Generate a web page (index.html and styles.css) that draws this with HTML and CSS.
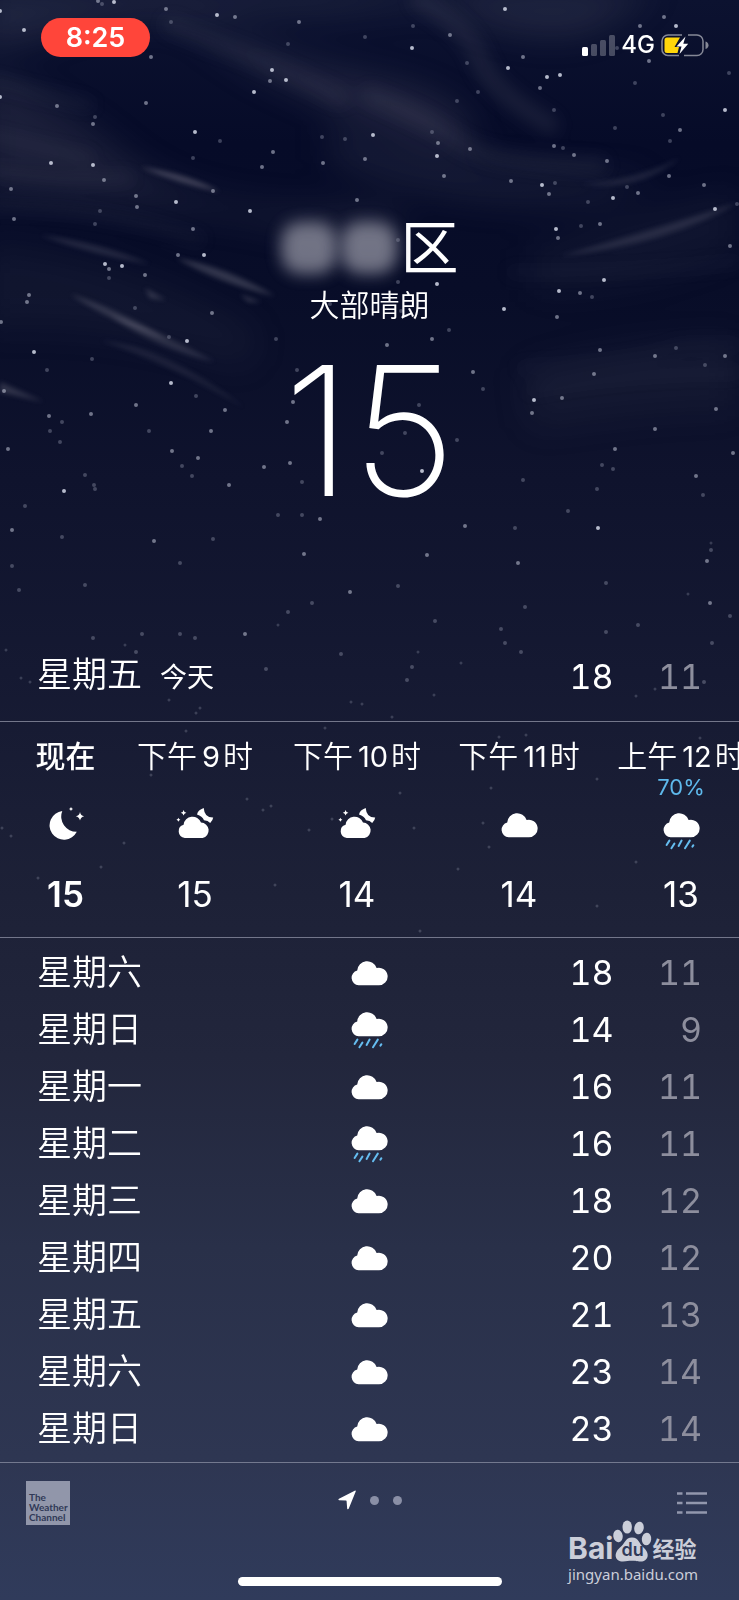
FILE: index.html
```html
<!DOCTYPE html>
<html lang="zh-CN">
<head>
<meta charset="utf-8">
<meta name="viewport" content="width=device-width, initial-scale=1">
<title>天气</title>
<link rel="stylesheet" href="styles.css">
</head>
<body>
<svg class="defs" width="0" height="0" aria-hidden="true">
  <symbol id="cloud" viewBox="0 0 37 26">
    <path d="M7.6 25.3A7.6 7.6 0 0 1 6.2 10.4A10 10 0 0 1 25.6 8A8.8 8.8 0 1 1 27.4 25.3Z"/>
  </symbol>
  <symbol id="rain" viewBox="0 0 37 38">
    <path d="M7.6 25.3A7.6 7.6 0 0 1 6.2 10.4A10 10 0 0 1 25.6 8A8.8 8.8 0 1 1 27.4 25.3Z"/>
    <path class="drops" d="M3.6 33L6.4 28.6M8.4 36.2L11.4 31.6M15.6 34L18.6 28.6M22 36.2L26.8 28.6M29.4 34.6L30.4 33.2"/>
  </symbol>
  <symbol id="night-cloud" viewBox="0 0 38 32">
    <path d="M8.8 31A6.8 6.8 0 0 1 7.6 17.7A9 9 0 0 1 25 15.6A7.8 7.8 0 0 1 26.6 31Z"/>
    <path d="M27.7 1Q22 3 21 7.4Q26.200 8.800 28 13.200Q32 13.400 34.200 16Q36.800 13.800 37.200 10.600Q28.400 10.800 27.700 1Z"/>
    <path d="M7.6 3Q8 5.4 10.4 5.8Q8 6.2 7.6 8.6Q7.2 6.2 4.8 5.8Q7.2 5.4 7.6 3ZM2.4 10.8Q2.7 12.4 4.4 12.8Q2.7 13.2 2.4 14.8Q2.1 13.2 .4 12.8Q2.1 12.4 2.4 10.8Z"/>
  </symbol>
  <symbol id="moon" viewBox="-3 0 39 35">
    <path d="M13.3 5A14.4 14.4 0 1 0 27.8 25.8A15.2 15.2 0 0 1 13.3 5Z"/>
    <path d="M31 6Q31.7 9.7 35.2 10.3Q31.7 10.9 31 14.6Q30.3 10.9 26.8 10.3Q30.3 9.7 31 6ZM22 1Q22.4 2.7 24 3Q22.4 3.3 22 5Q21.6 3.3 20 3Q21.6 2.7 22 1Z"/>
  </symbol>
</svg>

<div class="app">
  <svg class="sky" viewBox="0 0 739 940" preserveAspectRatio="xMidYMin slice" aria-hidden="true">
    <filter id="haze" x="-20%" y="-50%" width="140%" height="200%"><feGaussianBlur stdDeviation="18"/></filter>
    <filter id="mist" x="-20%" y="-50%" width="140%" height="200%"><feGaussianBlur stdDeviation="8"/></filter>
    <filter id="wisp" x="-20%" y="-50%" width="140%" height="200%"><feGaussianBlur stdDeviation="2.500"/></filter>
    <filter id="glow"><feGaussianBlur stdDeviation=".6"/></filter>
    <g class="haze" filter="url(#haze)">
      <path d="M-20 -10H660L590 30Q510 45 440 0L330 10Q200 10 100 20L-20 50Z" opacity=".13"/>
      <path d="M150 0Q260 60 370 80T470 150L420 140Q320 100 260 70Z" opacity=".16"/>
      <path d="M-20 70Q60 100 130 160T400 210L390 250Q200 200 -20 190Z" opacity=".12"/>
      <path d="M330 120Q420 170 660 180L600 200Q440 210 330 160Z" opacity=".1"/>
      <path d="M530 250Q640 210 739 190V250Q640 290 530 290Z" opacity=".05"/>
      <path d="M-20 240Q120 250 260 330L250 370Q120 320 -20 330Z" opacity=".05"/>
      <path d="M520 370Q640 340 739 340V410Q640 410 530 430Z" opacity=".05"/>
    </g>
    <g class="wisps" filter="url(#mist)">
      <path d="M420 0Q470 30 480 60T550 125" stroke-width="20" opacity=".09"/>
      <path d="M170 25Q220 45 240 52T340 98" stroke-width="18" opacity=".07"/>
      <path d="M370 95Q430 120 460 142T600 165" stroke-width="18" opacity=".07"/>
      <path d="M-10 80Q50 96 90 105M-10 135Q50 150 90 158M-10 170Q60 184 130 178M-10 206Q100 205 200 240" stroke-width="10" opacity=".07"/>
      <path d="M510 272Q620 275 739 262M530 390Q620 372 739 372M520 368Q640 362 680 345H739" stroke-width="10" opacity=".04"/>
    </g>
    <g class="streaks" filter="url(#wisp)">
      <path d="M140 167Q190 174 220 192Q180 184 140 167Z" opacity=".28"/>
      <path d="M176 258Q225 266 275 296Q220 284 176 258Z" opacity=".22"/>
      <path d="M40 235Q100 242 150 264Q95 256 40 235Z" opacity=".14"/>
      <path d="M70 294Q110 306 170 340Q115 324 70 294Z" opacity=".2"/>
      <path d="M110 316Q150 326 215 362Q160 350 110 316Z" opacity=".16"/>
      <path d="M100 340Q165 346 245 408Q170 364 100 340Z" opacity=".1"/>
      <path d="M0 382L44 402L0 392ZM145 288L166 300L150 298ZM240 294L262 302L248 302Z" opacity=".2"/>
      <path d="M560 256Q640 234 739 202Q670 244 560 256Z" opacity=".14"/>
      <path d="M580 184Q630 182 680 158Q640 192 580 184Z" opacity=".12"/>
    </g>
    <g class="stars" filter="url(#glow)">
      <path class="star-bright" d="M254 92h0M114 2h0M24 30h0M217 15h0M272 70h0M51 163h0M93 165h0M286 80h0M195 132h0M0 97h0M0 11h0M505 9h0M412 48h0M508 68h0M547 77h0M560 75h0M676 26h0M437 156h0M725 110h0M373 135h0M542 185h0M176 202h0M250 211h0M122 266h0M204 255h0M187 341h0M34 352h0M64 491h0M105 264h0M171 383h0M437 284h0M504 309h0M534 400h0M422 471h0M715 209h0M604 280h0M559 291h0M556 229h0M613 198h0M598 528h0"/>
      <path class="star-medium" d="M98 1h0M166 9h0M235 17h0M299 22h0M151 57h0M270 81h0M146 103h0M93 124h0M57 106h0M104 180h0M11 189h0M136 196h0M213 191h0M262 167h0M273 152h0M323 163h0M365 159h0M450 35h0M523 57h0M664 17h0M640 26h0M649 61h0M540 88h0M438 143h0M444 176h0M470 149h0M511 181h0M554 146h0M574 155h0M607 161h0M669 176h0M704 185h0M638 193h0M549 194h0M680 130h0M137 207h0M14 219h0M193 229h0M145 275h0M109 269h0M178 255h0M212 313h0M29 295h0M27 302h0M1 322h0M4 391h0M91 414h0M136 405h0M49 416h0M225 410h0M211 431h0M172 451h0M198 458h0M8 449h0M264 467h0M229 485h0M357 200h0M387 345h0M432 339h0M473 372h0M532 413h0M293 402h0M287 422h0M290 463h0M320 519h0M600 224h0M558 238h0M730 246h0M580 293h0M557 317h0M600 350h0M655 356h0M594 374h0M562 398h0M655 429h0M716 409h0M733 453h0M615 449h0M696 476h0M725 356h0M12 530h0M465 526h0M154 541h0M304 554h0M427 555h0M518 563h0M707 561h0M710 603h0M245 634h0M350 592h0"/>
      <path class="star-faint" d="M102 4h0M171 22h0M288 44h0M365 37h0M95 117h0M220 141h0M193 158h0M322 137h0M345 139h0M413 26h0M467 63h0M478 92h0M457 101h0M432 132h0M554 110h0M635 83h0M663 115h0M670 141h0M615 128h0M729 73h0M617 48h0M563 148h0M555 183h0M627 187h0M100 211h0M95 224h0M109 278h0M135 308h0M169 337h0M92 359h0M47 370h0M196 396h0M62 422h0M50 431h0M60 442h0M149 431h0M182 466h0M192 476h0M85 475h0M94 485h0M95 489h0M25 506h0M330 304h0M401 311h0M398 240h0M398 282h0M449 330h0M483 389h0M419 405h0M405 433h0M382 453h0M457 440h0M523 480h0M297 370h0M276 339h0M302 482h0M278 515h0M302 515h0M588 202h0M737 204h0M581 226h0M592 297h0M676 348h0M705 365h0M602 465h0M613 469h0M597 489h0M703 495h0M568 511h0M12 566h0M85 585h0M62 537h0M515 528h0M213 539h0M180 563h0M19 590h0M398 586h0M711 550h0M606 583h0M525 607h0M288 612h0M312 603h0M435 621h0M501 629h0M505 643h0M638 625h0M606 632h0M730 616h0M712 643h0M93 638h0M142 634h0M180 634h0M195 638h0M521 652h0M136 652h0M341 654h0M266 669h0M412 667h0M407 680h0M704 682h0"/>
      <path class="star-dim" d="M6 650h0M125 645h0M278 625h0M688 594h0M711 543h0M21 678h0M30 682h0M169 700h0M200 708h0M196 713h0M186 731h0M325 728h0M351 702h0M362 704h0M151 775h0M247 799h0M271 806h0M263 810h0M309 830h0M332 819h0M124 843h0M2 828h0M11 836h0M101 867h0M275 885h0M38 878h0M418 652h0M461 663h0M434 695h0M655 689h0M636 696h0M392 717h0M526 735h0M491 788h0M483 823h0M414 828h0M489 847h0M597 779h0M636 862h0M458 869h0M597 906h0M420 931h0M700 738h0M499 737h0M400 793h0"/>
    </g>
  </svg>

  <header class="status">
    <button class="clock" type="button">8:25</button>
    <div class="indicators">
      <svg class="signal" viewBox="0 0 33 21" role="img" aria-label="信号">
        <rect x="0" y="12" width="6" height="9" rx="1.5" fill="#fff"/>
        <g fill="#fff" opacity=".25"><rect x="9" y="9" width="6" height="12" rx="1.5"/><rect x="18" y="5" width="6" height="16" rx="1.5"/><rect x="27" y="0" width="6" height="21" rx="1.5"/></g>
      </svg>
      <span class="network">4G</span>
      <svg class="battery" viewBox="0 0 48 23" role="img" aria-label="电池充电中">
        <path d="M21 1H7A6 6 0 0 0 1 7V15A6 6 0 0 0 7 21.500H18M27 1H36A6 6 0 0 1 42 7V15.500A6 6 0 0 1 36 21.500H23" fill="none" stroke="#fff" stroke-opacity=".5" stroke-width="1.500"/>
        <path d="M44.500 7.500Q47.500 8.500 47.500 11.300T44.500 15Z" fill="#fff" opacity=".5"/>
        <path d="M6 3.500H19L13.500 13H18L16.500 19H6A2.500 2.500 0 0 1 3.500 16.500V6A2.500 2.500 0 0 1 6 3.500Z" fill="#ffd60a"/>
        <path d="M24.500 2.500L15.500 12.600H20.500L18.500 20L27.200 9.800H22.300Z" fill="#fff"/>
      </svg>
    </div>
  </header>

  <main>
    <section class="current">
      <h1 class="place"><span class="smudge"></span><span class="smudge"></span><span>区</span></h1>
      <p class="condition">大部晴朗</p>
      <p class="temperature">15</p>
    </section>

    <section class="today">
      <h2 class="today-name">星期五<span class="today-tag">今天</span></h2>
      <span class="high">18</span>
      <span class="low">11</span>
    </section>

    <ul class="hours">
      <li class="hour now"><span class="time">现在</span><span class="chance"></span><svg class="icon moon"><use href="#moon"/></svg><span class="degrees">15</span></li>
      <li class="hour"><span class="time">下午<span class="num">9</span>时</span><span class="chance"></span><svg class="icon night-cloud"><use href="#night-cloud"/></svg><span class="degrees">15</span></li>
      <li class="hour"><span class="time">下午<span class="num">10</span>时</span><span class="chance"></span><svg class="icon night-cloud"><use href="#night-cloud"/></svg><span class="degrees">14</span></li>
      <li class="hour"><span class="time">下午<span class="num">11</span>时</span><span class="chance"></span><svg class="icon cloud"><use href="#cloud"/></svg><span class="degrees">14</span></li>
      <li class="hour"><span class="time">上午<span class="num">12</span>时</span><span class="chance">70%</span><svg class="icon rain"><use href="#rain"/></svg><span class="degrees">13</span></li>
    </ul>

    <table class="days">
      <tbody>
        <tr><th class="day" scope="row">星期六</th><td class="sky-cell"><svg class="icon cloud"><use href="#cloud"/></svg></td><td class="high">18</td><td class="low">11</td></tr>
        <tr><th class="day" scope="row">星期日</th><td class="sky-cell"><svg class="icon rain"><use href="#rain"/></svg></td><td class="high">14</td><td class="low">9</td></tr>
        <tr><th class="day" scope="row">星期一</th><td class="sky-cell"><svg class="icon cloud"><use href="#cloud"/></svg></td><td class="high">16</td><td class="low">11</td></tr>
        <tr><th class="day" scope="row">星期二</th><td class="sky-cell"><svg class="icon rain"><use href="#rain"/></svg></td><td class="high">16</td><td class="low">11</td></tr>
        <tr><th class="day" scope="row">星期三</th><td class="sky-cell"><svg class="icon cloud"><use href="#cloud"/></svg></td><td class="high">18</td><td class="low">12</td></tr>
        <tr><th class="day" scope="row">星期四</th><td class="sky-cell"><svg class="icon cloud"><use href="#cloud"/></svg></td><td class="high">20</td><td class="low">12</td></tr>
        <tr><th class="day" scope="row">星期五</th><td class="sky-cell"><svg class="icon cloud"><use href="#cloud"/></svg></td><td class="high">21</td><td class="low">13</td></tr>
        <tr><th class="day" scope="row">星期六</th><td class="sky-cell"><svg class="icon cloud"><use href="#cloud"/></svg></td><td class="high">23</td><td class="low">14</td></tr>
        <tr><th class="day" scope="row">星期日</th><td class="sky-cell"><svg class="icon cloud"><use href="#cloud"/></svg></td><td class="high">23</td><td class="low">14</td></tr>
      </tbody>
    </table>
  </main>

  <footer class="toolbar">
    <a class="channel" href="#">The<br>Weather<br>Channel</a>
    <nav class="pages" aria-label="城市">
      <button class="page here" type="button" aria-label="当前位置"><svg viewBox="0 0 18 20"><path d="M17.200 .6Q18 .4 17.700 1.400L10.800 18.600Q10 20 9.200 18.800L8.600 11.200Q8.600 10.600 8 10.600L1 10.200Q-.4 9.600 1 8.700Z" fill="#fff"/></svg></button>
      <button class="page dot" type="button" aria-label="城市 2"></button>
      <button class="page dot" type="button" aria-label="城市 3"></button>
    </nav>
    <button class="list" type="button" aria-label="列表"><svg viewBox="0 0 30 22"><path d="M0 1.500H5.500M9 1.500H30M0 11H5.500M9 11H30M0 20.500H5.500M9 20.500H30" stroke="#9297ad" stroke-width="2.600"/></svg></button>
  </footer>

  <div class="home-bar"></div>

  <div class="watermark">
    <div class="brand">
      <span class="bai">Bai</span>
      <span class="paw">
        <svg viewBox="0 0 39 42" aria-hidden="true"><g fill="#cbced9"><ellipse cx="5" cy="16" rx="4.700" ry="6.300" transform="rotate(-8 5 16)"/><ellipse cx="14.200" cy="7" rx="4.700" ry="6.600"/><ellipse cx="26" cy="8" rx="4.700" ry="6.300" transform="rotate(12 26 8)"/><ellipse cx="33.500" cy="19" rx="4.700" ry="6.300" transform="rotate(5 33.500 19)"/><path d="M19 17.500C26 17.500 26 24 30.500 27.500C38 34 34.500 41.500 28 41.500C23 41.500 23 40.800 19 40.800S14 41.500 10 41.500C2 41.500 0 33.500 7 27.500C12 24 12 17.500 19 17.500Z"/></g></svg>
        <span class="du">du</span>
      </span>
      <span class="jingyan">经验</span>
    </div>
    <div class="site">jingyan.baidu.com</div>
  </div>
</div>
</body>
</html>
```
FILE: styles.css
```css
* {
  box-sizing: border-box;
}

body {
  margin: 0;
  background: #303a59;
  color: #fff;
  font-family: Inter, "Noto Sans CJK SC", sans-serif;
}

h1, h2, p, ul {
  margin: 0;
  padding: 0;
}

button {
  padding: 0;
  border: 0;
  background: none;
  color: inherit;
  font: inherit;
}

.defs {
  display: block;
}

.app {
  position: relative;
  display: flex;
  flex-direction: column;
  min-height: 100vh;
  overflow: hidden;
  background: linear-gradient(#0c1230 0, #060b28 9%, #080d28 18%, #0f132d 30%, #151932 42%, #1d2137 56%, #22263c 66%, #293049 78%, #2e3652 91%, #303b5b 100%);
}

.sky {
  position: absolute;
  top: 0;
  left: 0;
  width: 100%;
}

.haze {
  fill: #b4aeb8;
}

.wisps {
  fill: none;
  stroke: #c8c2cc;
  stroke-linecap: round;
}

.streaks {
  fill: #c8c2cc;
}

.stars {
  fill: none;
  stroke: #d4d8e8;
  stroke-linecap: round;
}

.star-bright {
  stroke-width: 4;
  opacity: 0.85;
}

.star-medium {
  stroke-width: 4;
  opacity: 0.5;
}

.star-faint {
  stroke-width: 4;
  opacity: 0.27;
}

.star-dim {
  stroke-width: 3;
  opacity: 0.2;
}

.status {
  position: relative;
  display: flex;
  align-items: flex-start;
  justify-content: space-between;
  padding: 18px 30px 0 41px;
}

.clock {
  width: 109px;
  height: 39px;
  border-radius: 20px;
  background: #ff453a;
  font-size: 27px;
  font-weight: 600;
}

.indicators {
  display: flex;
  align-items: center;
  padding-top: 12px;
}

.signal {
  width: 33px;
  height: 21px;
}

.network {
  margin: 0 6px;
  font-size: 24px;
  font-weight: 500;
  line-height: 30px;
}

.battery {
  width: 48px;
  height: 23px;
}

main {
  position: relative;
}

.current {
  display: flex;
  flex-direction: column;
  align-items: center;
  padding-top: 146px;
}

.place {
  display: flex;
  align-items: center;
  font-size: 58px;
  font-weight: 400;
  line-height: 84px;
}

.smudge {
  width: 56px;
  height: 52px;
  margin: 0 3px 0 1px;
  border-radius: 20px;
  background: #8b8c9b;
  filter: blur(8px);
  opacity: 0.8;
}

.condition {
  font-size: 30px;
  font-weight: 350;
  line-height: 30px;
}

.temperature {
  padding-top: 21px;
  font-size: 180px;
  font-weight: 200;
  line-height: 180px;
}

.today {
  display: grid;
  grid-template-columns: 58fr 29fr 13fr;
  align-items: center;
  padding: 110px 37px 0;
  border-bottom: 1px solid #73768a;
}

.today-name {
  font-size: 35px;
  font-weight: 350;
  line-height: 87px;
}

.today-tag {
  margin-left: 18px;
  font-size: 27px;
  font-weight: 400;
}

.high, .low {
  padding: 0;
  font-size: 34px;
  font-variant-numeric: tabular-nums;
  text-align: right;
}

.high {
  padding-right: 2px;
}

.low {
  color: #8d8e9d;
}

.hours {
  display: flex;
  height: 216px;
  overflow: hidden;
  border-bottom: 1px solid #73768a;
  list-style: none;
}

.hour {
  display: flex;
  flex: 0 0 162px;
  flex-direction: column;
  align-items: center;
  padding-top: 13px;
}

.now {
  flex-basis: 114px;
  padding-left: 17px;
}

.time {
  font-size: 30px;
  font-weight: 350;
  line-height: 42px;
  white-space: nowrap;
}

.num {
  margin: 0 3px 0 5px;
  font-size: 29px;
  font-weight: 400;
}

.now .time, .now .degrees {
  font-weight: 600;
}

.now .time {
  font-weight: 500;
}

.chance {
  height: 24px;
  color: #5eb9ec;
  font-size: 22px;
  line-height: 18px;
}

.degrees {
  margin-top: auto;
  padding-bottom: 22px;
  font-size: 35px;
  line-height: 42px;
}

.icon {
  fill: #fff;
}

.drops {
  fill: none;
  stroke: #65bdf0;
  stroke-width: 2;
  stroke-linecap: round;
}

.cloud {
  width: 37px;
  height: 26px;
}

.rain {
  width: 37px;
  height: 38px;
}

.night-cloud {
  width: 38px;
  height: 32px;
}

.moon {
  width: 39px;
  height: 35px;
}

.hour .icon {
  margin-top: 10px;
}

.hour .moon, .hour .night-cloud {
  margin-top: 5px;
}

.days {
  width: 100%;
  padding: 6px 37px 5px;
  border-bottom: 1px solid #73798f;
  border-spacing: 0;
  table-layout: fixed;
}

.day {
  width: 42%;
  padding: 0;
  font-size: 35px;
  font-weight: 350;
  line-height: 57px;
  text-align: left;
}

.sky-cell {
  width: 16%;
  padding: 0;
  text-align: center;
}

.sky-cell .icon {
  display: block;
  margin: 0 auto;
}

td.high {
  width: 29%;
}

td.low {
  width: 13%;
}

.toolbar {
  position: relative;
  display: grid;
  grid-template-columns: 1fr auto 1fr;
  align-items: center;
  padding: 18px 26px 0;
}

.channel {
  display: flex;
  align-items: flex-end;
  width: 44px;
  height: 44px;
  padding: 0 0 3px 3px;
  background: #9196aa;
  color: #303957;
  font-family: Lato, sans-serif;
  font-size: 10px;
  font-weight: 700;
  line-height: 10px;
  text-decoration: none;
}

.pages {
  display: flex;
  align-items: center;
  gap: 14px;
  padding-bottom: 6px;
}

.page {
  width: 9px;
  height: 9px;
  border-radius: 5px;
}

.here {
  width: 18px;
  height: 20px;
}

.here svg, .list svg {
  display: block;
}

.dot {
  background: #8a8fa6;
}

.list {
  width: 30px;
  height: 22px;
  margin-right: 6px;
  justify-self: end;
}

.home-bar {
  position: relative;
  width: 264px;
  height: 9px;
  margin: auto auto 14px;
  border-radius: 5px;
  background: #fff;
}

.watermark {
  position: absolute;
  right: 41px;
  bottom: 13px;
  color: #cbced9;
}

.brand {
  display: flex;
  align-items: flex-end;
}

.bai {
  font-size: 30px;
  font-weight: 700;
  line-height: 28px;
}

.paw {
  position: relative;
  width: 39px;
  height: 42px;
}

.paw svg {
  display: block;
}

.du {
  position: absolute;
  left: 8px;
  bottom: 2px;
  color: #303a59;
  font-size: 18px;
  font-weight: 600;
  line-height: 20px;
}

.jingyan {
  font-size: 22px;
  font-weight: 700;
  line-height: 26px;
}

.site {
  font-family: "Noto Sans", sans-serif;
  font-size: 15px;
  line-height: 25px;
}
```
